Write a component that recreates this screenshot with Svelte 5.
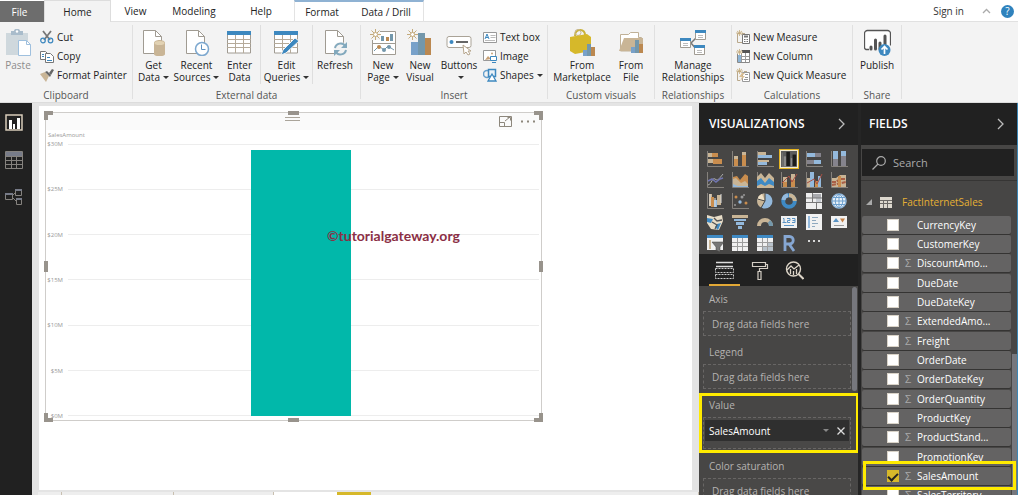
<script>
  const blue = '#3d88bf', tan = '#c9b596';
  const doc = `<path d="M3.500 1.500h12l6 6v17h-18z" fill="#fff" stroke="#a09b92"/><path d="M15.500 1.500v6h6" fill="none" stroke="#a09b92"/>`;
  const table = `<path d="M1.500 3h23v21h-23z" fill="#fff" stroke="#a09b92"/><path d="M1 2h24v4H1z" fill="${blue}"/><path d="M1 10.500h24M1 14.500h24M1 18.500h24M9.500 6v18M17.500 6v18" stroke="#b5aa99"/>`;
  const star = `<path d="M5.500 0v11M0 5.500h11M1.500 1.500l8 8M9.500 1.500l-8 8" stroke="#c4ab7c"/><circle cx="5.500" cy="5.500" r="2" fill="#fff" stroke="#c4ab7c"/>`;
  const big = {
    paste: `<path d="M1 4h22v22H1z" fill="#cfd8dd"/><path d="M6 4V2h3c0-3 6-3 6 0h3v4H6z" fill="#a9bccb"/><circle cx="12" cy="2.500" r="1.200" fill="#fff"/><path d="M13.500 11.500h8l4 4v11h-12z" fill="#fff" stroke="#9fc0de"/><path d="M21.500 11.500v4h4" fill="none" stroke="#9fc0de"/>`,
    get: doc + `<path d="M14 14c0-4 11-4 11 0v11c0 3-11 3-11 0z" fill="${tan}"/><ellipse cx="19.500" cy="14" rx="5" ry="2" fill="#e2d2b3"/>`,
    recent: doc + `<circle cx="19" cy="20" r="6.500" fill="#fff" stroke="#7da8cf" stroke-width="1.500"/><path d="M18.500 15.500v5h4" fill="none" stroke="#5f93c2"/>`,
    enter: table,
    edit: table + `<path d="M8 26l2-5L22 9l4 3-13 12z" fill="${blue}" stroke="#f3f3f3"/>`,
    refresh: doc + `<circle cx="18.500" cy="20" r="7" fill="#f3f3f3"/><path d="M13 19c1-5 8-6 10-2M24 21c-1 5-8 6-10 2" fill="none" stroke="#83a9bd" stroke-width="2"/><path d="M25 13v6h-6zM12 27v-6h6z" fill="#83a9bd"/>`,
    page: `<path d="M2.500 2.500h23v23h-23z" fill="#fff" stroke="#a09b92"/><path d="M2 14.500h24" stroke="#a09b92"/><path d="M11 7h3v5h-3zM20 5h3v7h-3z" fill="#7397ab"/><path d="M16 8h3v4h-3z" fill="#bb8850"/><path d="M4 22l5-5 5 4 4-4 6 4" fill="none" stroke="#7397ab"/><circle cx="9" cy="18" r="2" fill="#bb8850"/><circle cx="14" cy="21" r="2" fill="#7397ab"/><circle cx="19" cy="18" r="2" fill="#7397ab"/><path d="M0 0h10v11H0z" fill="#f3f3f3"/>` + star,
    visual: star + `<path d="M4 13h7v13H4z" fill="#78a1c9"/><path d="M11 4h7v22h-7z" fill="#7397ab"/><path d="M18 9h6v17h-6z" fill="#bb8850"/>`,
    buttons: `<rect x="1" y="7.500" width="24" height="11" rx="2" fill="#fff" stroke="#aaa397"/><circle cx="5.500" cy="13" r="2" fill="${blue}"/><path d="M10 13h12" stroke="#666" stroke-width="2"/><path d="M17 16l1 9 2-2 2 3 2-1-2-3h3z" fill="#fff" stroke="#b6a58c"/>`,
    market: `<path d="M6 7c0-8 11-8 10 0" fill="none" stroke="#c9b23a" stroke-width="2"/><circle cx="9" cy="3.500" r="3" fill="none" stroke="#c4b48a"/><path d="M1 8l17-3 4 3v14l-16 3-5-3z" fill="#d6b82a"/><path d="M14 21h4v6h-4z" fill="#78a1c9"/><path d="M18 15h4v12h-4z" fill="#7397ab"/><path d="M22 18h4v9h-4z" fill="#bb8850"/>`,
    file: `<path d="M2.500 22V5.500h8l2-2h8v5h3V22z" fill="#fff" stroke="#c0b197"/><path d="M1 22l5-13h19v13z" fill="${tan}"/><path d="M13 18h4v6h-4z" fill="#78a1c9"/><path d="M17 11h4v13h-4z" fill="#7397ab"/><path d="M21 15h4v9h-4z" fill="#bb8850"/>`,
    manage: `<path d="M11 14l6-6M11 14l6 7" stroke="#777" stroke-width="1.500"/><g fill="#fff" stroke="#a09b92"><path d="M.500 9.500h10v9H.500zM15.500 1.500h10v9h-10zM14.500 16.500h10v9h-10z"/></g><path d="M0 9h11v3H0zM15 1h11v3H15zM14 16h11v3H14z" fill="${blue}"/><path d="M3 14.500h5M3 16.500h5M18 6.500h5M18 8.500h5M17 21.500h5M17 23.500h5" stroke="#bbb"/>`,
    publish: `<path d="M5 20.500H2a2 2 0 0 1-1.500-2v-14a3 3 0 0 1 3-3h20a3 3 0 0 1 3 3v12" fill="#fff" stroke="#555" stroke-width="1.300"/><path d="M7 18v2M11.500 11v9M16 14v6M21 7v8" stroke="#555" stroke-width="3" stroke-linecap="round"/><circle cx="20.500" cy="21" r="6" fill="${blue}"/><path d="M20.500 25v-7M17.500 20.500l3-3 3 3" fill="none" stroke="#fff" stroke-width="1.700"/>`
  };
  const small = {
    cut: `<path d="M3 1l7 9M11 1l-7 9" stroke="#777" stroke-width="1.800"/><circle cx="3" cy="10.500" r="2.300" fill="none" stroke="${blue}" stroke-width="1.200"/><circle cx="10.500" cy="10.500" r="2.300" fill="none" stroke="${blue}" stroke-width="1.200"/>`,
    copy: `<path d="M.500 2.500h5l2 2v6h-7z" fill="#fff" stroke="#777"/><path d="M5.500 4.500h5l3 3v6h-8z" fill="#fff" stroke="#777"/><path d="M2 5.500h2M2 7.500h2M7 8.500h3M7 11.500h5" stroke="${blue}"/>`,
    painter: `<path d="M0 6l5-2 4 4-3 6z" fill="${tan}"/><path d="M5 4l2-1 4 4-1 2z" fill="#666"/><path d="M9 5l3-4 2 1-3 5z" fill="#666"/>`,
    text: `<path d="M.500 2.500h13v10H.500z" fill="#fff" stroke="#999"/><path d="M2 9l2-5 2 5M3 7.500h2" fill="none" stroke="${blue}"/><path d="M7.500 5.500h5M7.500 7.500h5M2 10.500h10" stroke="#bbb"/>`,
    image: `<path d="M.500 1.500h12v10H.500z" fill="#fff" stroke="#999"/><path d="M2 11l3-4 3 3" fill="#c8a176"/><circle cx="9" cy="4.500" r="1" fill="#c8a176"/><path d="M7.500 7.500h6v4h-6zM9 13.500h4" fill="#fff" stroke="${blue}"/>`,
    shapes: `<circle cx="4" cy="6" r="3.500" fill="none" stroke="#67a0cc" stroke-width="1.500"/><path d="M5.500 1.500h7v7h-7z" fill="#e8f1f8" stroke="${blue}" stroke-width="1.500"/><path d="M9 6l4 7H5z" fill="#fff" stroke="${blue}" stroke-width="1.300"/>`,
    measure: `<path d="M4.500 3.500h-3v9h5M6 3.500h3" fill="none" stroke="#b9a88b"/><path d="M6.500 4.500h7v9h-7z" fill="#fff" stroke="#777"/><path d="M8 6.500h4" stroke="#777" stroke-width="2"/><path d="M8 9.500h4M8 11.500h4" stroke="#777" stroke-dasharray="1 .500"/><path d="M3.500 0v6M0 3h7M1 1l5 4M6 1L1 5" stroke="#c4ab7c" stroke-width=".800"/>`,
    column: `<path d="M1.500 5v8.500h12v-11H6" fill="#fff" stroke="#888"/><path d="M6 1h8v3H6z" fill="#555"/><path d="M2 6h3v7H2z" fill="#8db4d5"/><path d="M5.500 4v9M9.500 4v9M5 7.500h8M5 10.500h8" stroke="#999"/><path d="M3.500 0v6M0 3h7M1 1l5 4M6 1L1 5" stroke="#c4ab7c" stroke-width=".800"/>`,
    quick: `<path d="M5 3.500H1.500v9H4M8 3.500h3" fill="none" stroke="#b9a88b"/><path d="M6.500 4.500h7v9h-7z" fill="#fff" stroke="#999"/><path d="M6 5L3 9h3l-2 4 5-5H6l3-3z" fill="#d9bd91"/><path d="M9 6.500h3M9 9.500h3M8 11.500h4" stroke="#999"/><path d="M3.500 0v6M0 3h7M1 1l5 4M6 1L1 5" stroke="#c4ab7c" stroke-width=".800"/>`
  };

  const groups = [
    { id: 'clipboard', label: 'Clipboard', big: [['paste', 'Paste']], small: [['cut', 'Cut'], ['copy', 'Copy'], ['painter', 'Format Painter']] },
    { id: 'external', label: 'External data', big: [['get', 'Get', 'Data', 1], ['recent', 'Recent', 'Sources', 1], ['enter', 'Enter', 'Data'], ['edit', 'Edit', 'Queries', 1], ['refresh', 'Refresh']] },
    { id: 'insert', label: 'Insert', big: [['page', 'New', 'Page', 1], ['visual', 'New', 'Visual'], ['buttons', 'Buttons', '', 1]], small: [['text', 'Text box'], ['image', 'Image'], ['shapes', 'Shapes', 1]] },
    { id: 'custom', label: 'Custom visuals', big: [['market', 'From', 'Marketplace'], ['file', 'From', 'File']] },
    { id: 'relations', label: 'Relationships', big: [['manage', 'Manage', 'Relationships']] },
    { id: 'calc', label: 'Calculations', small: [['measure', 'New Measure'], ['column', 'New Column'], ['quick', 'New Quick Measure']] },
    { id: 'share', label: 'Share', big: [['publish', 'Publish']] }
  ];

  const O = '#c98d4e', B = '#94b9dc', S = '#c9b596', D = '#3f8ac4', G = '#85838c';
  const ax = `<path d="M1.500 1v15.500H18" fill="none" stroke="#85817c"/>`;
  const r = (c, x, y, w, h) => `<path fill="${c}" d="M${x} ${y}h${w}v${h}h-${w}z"/>`;
  const visuals = [
    ['Stacked bar', ax + r(S, 2, 3, 6, 4) + r(O, 6, 3, 6, 4) + r(S, 2, 9, 5, 4) + r(O, 7, 9, 9, 5)],
    ['Stacked column', ax + r(S, 3, 6, 4, 4) + r(O, 3, 9, 4, 7) + r(S, 11, 2, 4, 4) + r(O, 11, 5, 4, 11)],
    ['Clustered bar', ax + r(S, 2, 2, 8, 3) + r(B, 2, 5, 14, 3) + r(S, 2, 10, 11, 2) + r(B, 2, 12, 9, 3)],
    ['Clustered column', `<path d="M1.500 2v15.500H18" fill="none" stroke="#777"/>` + r('#8a8a8a', 3, 6, 3, 11) + r('#1b1b1b', 6, 1, 4, 16) + r('#8a8a8a', 11, 8, 2, 9) + r('#1b1b1b', 13, 4, 4, 13)],
    ['100% stacked bar', ax + r(B, 2, 3, 8, 4) + r(G, 10, 3, 6, 4) + r(G, 2, 10, 7, 4) + r(B, 9, 10, 7, 4)],
    ['100% stacked column', ax + r(B, 3, 1, 5, 9) + r(G, 3, 9, 5, 7) + r(B, 11, 1, 5, 6) + r(G, 11, 6, 5, 10)],
    ['Line', ax + `<path d="M2 14c4-1 4-8 7-6s3 1 8-5" fill="none" stroke="#aaa"/><path d="M2 10l4-2 4 3 4-3 3-1" fill="none" stroke="#7075b0" stroke-width="1.500"/>`],
    ['Area', ax + `<path d="M2 6l4-1 3 4 5-6 3 2v11H2z" fill="${O}"/><path d="M2 8l3-1 5 5 4-2 3 3v3H2z" fill="${S}"/><path d="M2 13l5 2h10v1H2z" fill="${B}"/>`],
    ['Stacked area', ax + `<path d="M1 6l4-4 4 5 4-5 5 5v9H1z" fill="${S}"/><path d="M1 10l4-3 4 5 4-5 5 4v5H1z" fill="${D}"/><path d="M1 15l4-2 4 2 4-2 5 2v2H1z" fill="${S}"/>`],
    ['Line and stacked column', ax + r(S, 3, 6, 4, 10) + r(S, 11, 3, 4, 13) + r(O, 3, 11, 4, 5) + r(O, 11, 9, 4, 7) + `<path d="M2 12l7-7 3 6 5-8" fill="none" stroke="#a94e42"/>`],
    ['Line and clustered column', ax + r(B, 5, 1, 4, 15) + r(S, 2, 7, 3, 9) + r(B, 13, 5, 3, 11) + r(O, 10, 10, 3, 6) + `<path d="M2 12l7-4 3 5 5-10" fill="none" stroke="#a94e42"/>`],
    ['Ribbon', ax + `<path d="M2 7h4l4-3h6v12H2z" fill="${S}"/><path d="M2 11h4l4-3h6M2 14l14-3" stroke="#a95f46" stroke-width="2" stroke-dasharray="4 1" fill="none"/>` + r(O, 8, 5, 3, 11)],
    ['Waterfall', ax + r(S, 3, 2, 3, 12) + r(O, 5, 5, 3, 10) + r(B, 8, 8, 3, 7) + r(S, 11, 3, 4, 10) + `<path d="M4 2v12M9 6v9M15 2v9" stroke="#ddd"/>`],
    ['Scatter', ax + `<g fill="${O}"><circle cx="5" cy="5" r="1.500"/><circle cx="15" cy="11" r="1.500"/></g><g fill="#999"><circle cx="11" cy="5" r="1.500"/><circle cx="4" cy="13" r="1"/><circle cx="13" cy="3" r="1"/></g><circle cx="9" cy="10" r="1.700" fill="${B}"/>`],
    ['Pie', `<circle cx="9" cy="9" r="7.500" fill="${B}"/><path d="M9 9V1.500A7.500 7.500 0 0 0 5 15.500z" fill="${S}"/><path d="M9 9L1.500 8A7.500 7.500 0 0 1 6 2z" fill="#eee0c6"/><path d="M9 1v8l-4 7M9 9L1.500 7" stroke="#454442" fill="none"/>`],
    ['Donut', `<circle cx="9" cy="9" r="5.800" fill="none" stroke="${D}" stroke-width="4"/><path d="M9 3.200A5.800 5.800 0 0 1 14.800 9" fill="none" stroke="${S}" stroke-width="4"/><path d="M3.400 8A5.800 5.800 0 0 1 8 3.300" fill="none" stroke="${B}" stroke-width="4"/>`],
    ['Treemap', r('#eee', 1, 1, 16, 16) + r('#a9aaae', 8, 2, 8, 4) + r('#c8ccd2', 11, 6, 5, 4) + `<path d="M1 10.500h16M7.500 1v9M11.500 10v7M8 6h9M1 6h6" stroke="#777"/>`],
    ['Map', `<circle cx="9" cy="9" r="7" fill="#e9f2fa" stroke="${B}" stroke-width="1.500"/><path d="M2 9h14M9 2v14M3 5.500h12M3 12.500h12M9 2c-5 3-5 11 0 14M9 2c5 3 5 11 0 14" fill="none" stroke="#6b9fce"/>`],
    ['Filled map', `<path d="M1 2l7 2 8-2 1 6-4 9-8-1-4-6z" fill="#e8ddc8"/><path d="M1 5l6 1-2 4-4-1zM11 11l4-1-3 7-3-3z" fill="${D}"/><path d="M8 5l3 3 5-1M6 9l5 3-2 4" fill="none" stroke="#555" stroke-width="1.300"/>`],
    ['Funnel', r(S, 1, 2, 16, 3) + r(B, 3, 6, 12, 2) + r(B, 5, 9, 8, 3) + r(B, 7, 13, 4, 3)],
    ['Gauge', `<path d="M3 13a6 6 0 0 1 12 0" fill="none" stroke="${S}" stroke-width="4"/><path d="M13 8.500a6 6 0 0 1 2 4.500" fill="none" stroke="#7397ab" stroke-width="4"/>`],
    ['Card', r('#f1f1f1', 1, 3, 16, 12) + `<path d="M3 5.500h1v4M2.500 9.500h4M7 5.500h3v2H7.500v2H10M12 5.500h3v4h-3M12.500 7.500H15M4 12.500h10" fill="none" stroke="#5a93c4"/>`],
    ['Multi-row card', r('#f1f1f1', 1, 1, 16, 16) + r(B, 3, 3, 2, 12) + `<path d="M7 4.500h6M7 7.500h4M7 10.500h6M7 13.500h3" stroke="#8fa9bf"/>`],
    ['KPI', r('#f1f1f1', 1, 3, 16, 12) + `<path d="M3 9l3-4 3 4z" fill="#5a93c4"/><path d="M10 5.500h5l-2.500 4z" fill="#c47f45"/><path d="M4 12.500h10" stroke="#999"/>`],
    ['Slicer', r('#f1f1f1', 1, 1, 16, 15) + r(D, 1, 1, 16, 3) + r(S, 3, 6, 2, 9) + `<path d="M6 8h12l-4 5v5l-4-2v-3z" fill="#777" stroke="#454442" stroke-width=".500"/>`],
    ['Table', r('#f1f1f1', 1, 1, 16, 16) + r(D, 1, 1, 16, 3) + `<path d="M1 8.500h16M1 12.500h16M6.500 4v13M11.500 4v13" stroke="#9d9d9d"/>`],
    ['Matrix', r('#f1f1f1', 1, 1, 16, 16) + r(D, 1, 1, 16, 3) + r('#b9c3cc', 12, 8, 5, 9) + r('#b9c3cc', 7, 12, 5, 5) + `<path d="M1 8.500h16M1 12.500h16M6.500 4v13M11.500 4v13" stroke="#9d9d9d"/>`],
    ['R script', `<path d="M5 17V2.500h4.500a3.500 3.500 0 0 1 0 7.500H5M9 10l5 7" fill="none" stroke="#86a7d3" stroke-width="2.800"/>`],
    ['More visuals', r('#d8d8d8', 3, 6, 2, 2) + r('#d8d8d8', 8, 6, 2, 2) + r('#d8d8d8', 13, 6, 2, 2)]
  ];

  const wells = [
    { name: 'Axis' },
    { name: 'Legend' },
    { name: 'Value', field: 'SalesAmount' },
    { name: 'Color saturation' }
  ];
  const fields = [
    ['CurrencyKey'], ['CustomerKey'], ['DiscountAmo...', 1], ['DueDate'], ['DueDateKey'], ['ExtendedAmo...', 1],
    ['Freight', 1], ['OrderDate'], ['OrderDateKey', 1], ['OrderQuantity', 1], ['ProductKey'],
    ['ProductStand...', 1], ['PromotionKey'], ['SalesAmount', 1, 1], ['SalesTerritory...', 1]
  ];
  const ticks = ['$30M', '$25M', '$20M', '$15M', '$10M', '$5M', '$0M'];
  const handles = ['nw', 'n', 'ne', 'e', 'se', 's', 'sw', 'w'];
</script>

<div class="app">
  <header class="tabs">
    <button class="filetab">File</button>
    <button class="home">Home</button>
    <button>View</button>
    <button>Modeling</button>
    <button>Help</button>
    <div class="context">
      <button>Format</button>
      <button>Data / Drill</button>
    </div>
    <div class="account">
      <a href="#signin">Sign in</a>
      <button aria-label="Collapse ribbon"><svg width="9" height="6" viewBox="0 0 9 6"><path d="M1 5l3.500-3.500L8 5" fill="none" stroke="#aaa" stroke-width="1.300" /></svg></button>
      <button class="help" aria-label="Help">?</button>
    </div>
  </header>

  <div class="ribbon">
    {#each groups as g}
      <section class={g.id}>
        <div class="tools">
          {#each g.big ?? [] as [icon, a, b, menu]}
            <button class="big tool-{icon}">
              <svg width="27" height="27" viewBox="0 0 27 27">{@html big[icon]}</svg>
              <span>{a}</span>
              <span>{b}{#if menu}<i class="caret"></i>{/if}</span>
            </button>
          {/each}
          {#if g.small}
            <div class="smalls">
              {#each g.small as [icon, text, menu]}
                <button><svg width="14" height="14" viewBox="0 0 14 14">{@html small[icon]}</svg><span>{text}{#if menu}<i class="caret"></i>{/if}</span></button>
              {/each}
            </div>
          {/if}
        </div>
        <h2>{g.label}</h2>
      </section>
    {/each}
  </div>

  <main>
    <nav>
      <button aria-label="Report"><svg width="18" height="18" viewBox="0 0 18 18"><path d="M1 1h16v15H1z" fill="none" stroke="#d8ccb9" stroke-width="1.500" /><path d="M4 6h3v9H4zM8 10h2v5H8zM12 4h3v11h-3z" fill="#fff" /></svg></button>
      <button aria-label="Data"><svg width="18" height="18" viewBox="0 0 18 18"><path d="M1 1h16v4H1z" fill="#777b88" /><path d="M.500.500h17v17H.500zM0 5.500h17M0 9.500h17M0 13.500h17M6.500 5v12M11.500 5v12" fill="none" stroke="#85827e" /></svg></button>
      <button aria-label="Model"><svg width="18" height="18" viewBox="0 0 18 18"><path d="M.500 5.500h7v6h-7zM10.500 1.500h6v6h-6zM11.500 10.500h5v6h-5zM7 8l3-3M7 9l4 4" fill="none" stroke="#85827e" /><path d="M0 5h8v2H0zM10 1h7v2h-7zM11 10h6v2h-6z" fill="#777b88" /></svg></button>
    </nav>

    <div class="workspace">
      <div class="canvas">
        <article class="tile">
          {#each handles as h}<i class="handle {h}"></i>{/each}
          <div class="tilebar">
            <svg class="grip" width="15" height="5" viewBox="0 0 15 5"><path d="M0 .500h15M0 3.500h15" stroke="#aaa49a" /></svg>
            <button aria-label="Focus mode"><svg width="13" height="11" viewBox="0 0 13 11"><path d="M.500.500h12v10H.500zM.500 6.500h5v4M6 5l5-4M8.500 1.500h3v3" fill="none" stroke="#8d877c" /></svg></button>
            <button aria-label="More options"><svg width="14" height="3" viewBox="0 0 14 3"><path d="M0 .500h2v2H0zM6 .500h2v2H6zM12 .500h2v2h-2z" fill="#8d877c" /></svg></button>
          </div>
          <div class="charttitle">SalesAmount</div>
          <div class="chart">
            {#each ticks as t}<div class="tick"><span>{t}</span><hr /></div>{/each}
            <div class="plot"><div class="bar"></div></div>
          </div>
          <div class="credit">©tutorialgateway.org</div>
        </article>
      </div>
      <div class="sheets"><i></i><i></i><i></i><i class="open"></i><i class="add"></i><i></i></div>
    </div>

    <aside class="viz">
      <header class="panelhead">
        <h1>VISUALIZATIONS</h1>
        <button aria-label="Collapse visualizations"><svg width="8" height="12" viewBox="0 0 8 12"><path d="M1 1l5 5-5 5" fill="none" stroke="#bbb" stroke-width="1.300" /></svg></button>
      </header>
      <div class="gallery">
        {#each visuals as [name, art], i}
          <button class:chosen={i === 3} aria-label={name}><svg width="18" height="18" viewBox="0 0 18 18">{@html art}</svg></button>
        {/each}
      </div>
      <div class="modes">
        <button class="on" aria-label="Fields"><svg width="19" height="19" viewBox="0 0 19 19"><path d="M1 1.500h17M1 5.500h17" stroke="#ddd" stroke-width="1.500" /><path d="M.500 7.500h18v4H.500zM.500 13.500h18v4H.500z" fill="none" stroke="#ccc" stroke-dasharray="2 1" /></svg></button>
        <button aria-label="Format"><svg width="19" height="19" viewBox="0 0 19 19"><path d="M2.500 1.500h13v4h-13zM15.500 3.500h2v4h-8v3M8 10.500h3v8H8z" fill="none" stroke="#d4cec4" stroke-width="1.200" /></svg></button>
        <button aria-label="Analytics"><svg width="19" height="19" viewBox="0 0 19 19"><circle cx="8.500" cy="8" r="7" fill="none" stroke="#ddd5c8" stroke-width="1.400" /><path d="M13.500 13l5 5" stroke="#ddd5c8" stroke-width="2" /><path d="M2 9l4-4 3 3 5-4M5.500 8v5M8.500 10v4M11.500 8v5" fill="none" stroke="#ddd5c8" stroke-width="1.300" /></svg></button>
      </div>
      <div class="wells">
        {#each wells as w}
          <div class="well" class:marked={w.field}>
            <h3>{w.name}</h3>
            <div class="drop">
              {#if w.field}
                <div class="pill"><span>{w.field}</span>
                  <button aria-label="Field menu"><i class="caret"></i></button>
                  <button aria-label="Remove field"><svg width="8" height="8" viewBox="0 0 8 8"><path d="M.500.500l7 7M7.500.500l-7 7" stroke="#ddd" stroke-width="1.300" /></svg></button>
                </div>
              {:else}Drag data fields here{/if}
            </div>
          </div>
        {/each}
        <i class="scroll"></i>
      </div>
    </aside>

    <aside class="fields">
      <header class="panelhead">
        <h1>FIELDS</h1>
        <button aria-label="Collapse fields"><svg width="8" height="12" viewBox="0 0 8 12"><path d="M1 1l5 5-5 5" fill="none" stroke="#bbb" stroke-width="1.300" /></svg></button>
      </header>
      <label class="search">
        <svg width="14" height="14" viewBox="0 0 14 14"><circle cx="9" cy="5" r="4.300" fill="none" stroke="#aaa" stroke-width="1.200" /><path d="M6 8l-5.500 5.500" stroke="#aaa" stroke-width="1.300" /></svg>
        <input type="text" placeholder="Search" aria-label="Search" />
      </label>
      <div class="tree">
        <button class="tablename">
          <svg width="6" height="6" viewBox="0 0 6 6"><path d="M6 0v6H0z" fill="#aaa" /></svg>
          <svg width="12" height="11" viewBox="0 0 12 11"><path d="M0 0h12v11H0z" fill="#ddd8ce" /><path d="M0 3.500h12M0 6.500h12M3.500 3v8M7.500 3v8" stroke="#6b6864" /></svg>
          <span>FactInternetSales</span>
        </button>
        <ul>
          {#each fields as [name, sum, on]}
            <li class:marked={on}>
              <label><input type="checkbox" checked={!!on} /><span class="sum">{sum ? 'Σ' : ''}</span><span>{name}</span></label>
            </li>
          {/each}
        </ul>
        <i class="scroll"></i>
      </div>
    </aside>
  </main>
</div>

<style>
  :global(body) { margin: 0; overflow: hidden; }
  * { box-sizing: border-box; }
  .app { display: flex; flex-direction: column; height: 100vh; overflow: hidden; font: 10px/12px "Open Sans", "Noto Sans", sans-serif; color: #222; background: #fff; }
  button { border: 0; padding: 0; margin: 0; background: none; font: inherit; color: inherit; }
  h1, h2, h3, ul, hr { margin: 0; padding: 0; font-weight: 400; }
  svg { display: block; flex: none; }

  .tabs { display: grid; grid-template-columns: 44px 67px 49px 68px 66px 130px 1fr; height: 22px; flex: none; border-bottom: 1px solid #e1e1e1; }
  .filetab { background: #6d6d6d; color: #fff; margin-top: 1px; padding-right: 5px; }
  .home { background: #f3f3f3; border: 1px solid #ddd; border-bottom: 0; height: 22px; }
  .context { display: grid; grid-template-columns: 54px 1fr; border: 1px solid #e3e3e3; border-top: 2px solid #8fb2d3; border-bottom: 0; }
  .account { display: flex; align-items: center; justify-content: flex-end; gap: 18px; padding-right: 4px; }
  .account a { color: #333; text-decoration: none; }
  .help { width: 13px; height: 13px; border-radius: 50%; background: #2f82bd; color: #fff; margin-left: -8px; }

  .ribbon { display: grid; grid-template-columns: 133px 228px 187px 107px 77px 121px 49px 1fr; height: 81px; flex: none; background: #f3f3f3; padding-top: 3px; border-bottom: 1px solid #dcdcdc; }
  section { display: flex; flex-direction: column; border-right: 1px solid #e0e0e0; height: 74px; }
  section h2 { font-size: 10px; line-height: 12px; text-align: center; color: #555; }
  .tools { display: grid; height: 64px; flex: none; }
  .clipboard .tools { grid-template-columns: 36px 1fr; }
  .external .tools { grid-template-columns: 41px 45px 41px 52px 45px; }
  .insert .tools { grid-template-columns: 44px 30px 48px 1fr; }
  .custom .tools { grid-template-columns: 68px 30px; }
  .big { display: flex; flex-direction: column; align-items: center; padding-top: 4px; white-space: nowrap; height: 59px; }
  .big svg { margin-bottom: 3px; }
  .big span { display: flex; align-items: center; min-height: 12px; }
  .tool-paste { color: #8c8c8c; }
  .tool-edit, .tool-refresh { border-left: 1px solid #dedede; }
  .smalls { display: flex; flex-direction: column; padding: 2px 0 0 4px; }
  .smalls button { display: flex; align-items: center; gap: 3px; height: 19px; white-space: nowrap; }
  .insert .smalls { padding-left: 0; }
  .caret { display: inline-block; border: 3px solid transparent; border-top-color: #333; border-bottom: 0; margin-left: 3px; vertical-align: middle; }

  main { display: flex; flex: 1; min-height: 0; border-right: 1px solid #3b86b5; }
  nav { display: flex; flex-direction: column; align-items: center; gap: 19px; width: 32px; flex: none; padding-top: 11px; padding-right: 4px; background: #212121; }
  .workspace { display: flex; flex-direction: column; flex: 1; min-width: 0; padding: 3px 7px 0; background: #e4e4e4; }
  .canvas { flex: 1; min-height: 0; background: #fff; padding: 6px 0 0 6px; }
  .sheets { display: grid; grid-template-columns: 24px 112px 100px 63px 34px 1fr; height: 3px; margin: 2px -7px 0 -1px; flex: none; background: #eee; }
  .sheets i { border-right: 1px solid #c8bfb0; }
  .sheets .open { background: #fff; border: 0; }
  .sheets .add { background: #d6b82a; border: 0; }

  .tile { position: relative; display: flex; flex-direction: column; width: 497px; max-width: 100%; height: 309px; border: 1px solid #cfcdca; }
  .tilebar { display: flex; align-items: center; justify-content: flex-end; gap: 9px; height: 17px; flex: none; padding-right: 6px; background: #fafafa; }
  .grip { margin: 0 190px 4px 0; }
  .charttitle { font-size: 6px; line-height: 10px; color: #999; padding-left: 2px; }
  .chart { position: relative; display: flex; flex-direction: column; flex: 1; justify-content: space-between; }
  .tick { display: flex; align-items: center; height: 8px; font-size: 6px; line-height: 8px; color: #999; }
  .tick span { width: 17px; text-align: right; }
  hr { flex: 1; border: 0; border-top: 1px solid #ededed; margin: 0 2px 0 5px; }
  .plot { position: absolute; inset: 10px 8px 4px 22px; display: flex; justify-content: center; }
  .bar { width: 100px; background: #01b8aa; }
  .credit { position: absolute; left: 281px; top: 115px; font: 700 14px/16px Lato, sans-serif; color: #8b2f45; }
  .handle { position: absolute; z-index: 1; border: 0 solid #98938c; }
  .n, .s { left: 242px; width: 11px; height: 4px; }
  .e, .w { top: 148px; width: 4px; height: 11px; }
  .nw, .ne, .sw, .se { width: 9px; height: 9px; }
  .n, .nw, .ne { top: -2px; border-top-width: 4px; }
  .s, .sw, .se { bottom: -2px; border-bottom-width: 4px; }
  .w, .nw, .sw { left: -2px; border-left-width: 4px; }
  .e, .ne, .se { right: -2px; border-right-width: 4px; }

  aside { display: flex; flex-direction: column; flex: none; background: #474645; overflow: hidden; color: #ddd; line-height: 14px; }
  .viz { width: 162px; border-right: 3px solid #252525; }
  .fields { width: 156px; }
  .panelhead { display: flex; align-items: center; justify-content: space-between; height: 42px; flex: none; padding: 0 12px 0 10px; background: #212121; }
  .fields .panelhead { padding-left: 8px; }
  h1 { font-size: 12px; font-weight: 600; color: #fff; }
  .gallery { display: grid; grid-template-columns: repeat(6, 1fr); grid-auto-rows: 21px; padding: 3px 7px 0 4px; height: 109px; flex: none; }
  .gallery button { display: grid; place-items: center; }
  .chosen svg { background: #5c5c5c; outline: 1px solid #f5ecd0; box-shadow: 0 0 0 2px #e5b420; width: 16px; height: 16px; }
  .modes { display: flex; height: 32px; flex: none; padding-left: 10px; gap: 4px; background: #212121; }
  .modes button { display: grid; place-items: center; width: 31px; padding-top: 2px; border-bottom: 2px solid transparent; }
  .modes .on { border-color: #e2a836; }
  .wells { position: relative; flex: 1; min-height: 0; color: #b5b3b1; }
  .well { padding: 6px 7px 0 4px; height: 53px; }
  .well h3 { font-size: 10px; line-height: 14px; padding-left: 6px; margin-bottom: 5px; }
  .drop { height: 25px; border: 1px dashed #686665; padding: 5px 8px; white-space: nowrap; background: #494847; }
  .well.marked { position: relative; height: 61px; }
  .well.marked::after { content: ""; position: absolute; inset: 1px -1px 0 0; border: 3px solid #ffeb00; }
  .marked .drop { height: 32px; padding: 2px 1px; }
  .pill { display: flex; align-items: center; gap: 8px; height: 21px; padding: 0 4px; background: #2f2f2f; color: #fff; }
  .pill span { flex: 1; }
  .pill .caret { display: block; border-top-color: #888; margin: 0; }
  .scroll { position: absolute; background: #76777d; width: 5px; right: 1px; top: 1px; height: 104px; border-radius: 3px; }

  .search { display: flex; align-items: center; gap: 7px; height: 27px; flex: none; margin: 4px 3px 4px 1px; padding-left: 10px; background: #212121; }
  .search input { flex: 1; min-width: 0; border: 0; padding: 0; background: none; font: inherit; font-size: 11px; color: #ccc; outline: 0; }
  .search input::placeholder { color: #aaa; opacity: 1; }
  .tree { position: relative; flex: 1; min-height: 0; border-top: 1px solid #363534; }
  .tablename { display: flex; align-items: center; gap: 8px; height: 35px; padding: 7px 0 0 5px; color: #e6b034; }
  .tablename span { padding-left: 2px; }
  ul { list-style: none; padding: 0 6px 0 1px; }
  li { height: 18px; margin-bottom: 1px; background: #646363; border-radius: 2px; box-shadow: 0 1px #353433; color: #fff; }
  li:nth-child(3n) { margin-bottom: 2px; }
  li label { display: grid; grid-template-columns: 12px 14px 1fr; align-items: center; column-gap: 2px; height: 18px; padding-left: 25px; white-space: nowrap; }
  li input { appearance: none; display: grid; place-items: center; width: 12px; height: 12px; margin: 0; background: #fff; border: 1px solid #d9d3c8; }
  li input:checked { border-color: #d6b82a; background: #d6b82a; }
  li input:checked::before { content: ""; width: 4px; height: 8px; border: solid #222; border-width: 0 2px 2px 0; transform: rotate(45deg); margin-bottom: 2px; }
  .sum { color: #aaa; font-size: 11px; text-align: center; }
  li.marked { position: relative; }
  li.marked::after { content: ""; position: absolute; inset: -6px -5px -5px 1px; border: 3px solid #ffeb00; z-index: 2; }
  .fields .scroll { top: 173px; right: 0; bottom: 0; height: auto; border-radius: 0; }
</style>
